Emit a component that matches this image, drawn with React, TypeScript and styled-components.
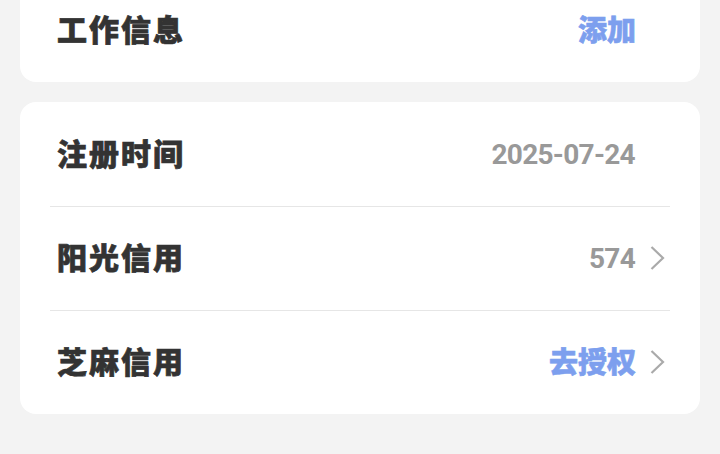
import React from "react";
import styled, { createGlobalStyle } from "styled-components";

const Global = createGlobalStyle`
  html, body { margin: 0; padding: 0; background: #f3f3f3; }
  body { width: 720px; height: 454px; overflow: hidden; font-family: "Noto Sans CJK SC", "Noto Sans", sans-serif; }
`;
const Page = styled.div`
  display: flex; flex-direction: column; gap: 20px; padding: 0 20px; margin-top: -21px;
`;
const Card = styled.section<{ $inset?: boolean }>`
  background: #fff; border-radius: 16px; padding: ${(p) => (p.$inset ? "1px" : "0")} 30px 0;
`;
const Row = styled.div<{ $last?: boolean }>`
  height: 103px; display: flex; align-items: center; padding: 0 5px 0 7px;
  border-bottom: ${(p) => (p.$last ? "none" : "1px solid #e6e6e6")};
`;
const Label = styled.span`
  flex: 1; padding-bottom: 6px; font-size: 30px; font-weight: 900; line-height: 30px; color: #333; letter-spacing: 2px;
  -webkit-text-stroke: 0.7px #333;
`;
const Value = styled.span<{ $accent?: boolean }>`
  padding-bottom: 6px; font-size: 29px; line-height: 30px; font-weight: 900; color: ${(p) => (p.$accent ? "#7d9fee" : "#999")};
  -webkit-text-stroke: 0.6px ${(p) => (p.$accent ? "#7d9fee" : "#999")};
`;
const Digits = styled(Value)`
  padding: 0 1px 0 0; font-family: "Roboto", sans-serif; font-size: 28px; font-weight: 700; letter-spacing: -0.7px;
  -webkit-text-stroke: 0;
`;
const Chevron = styled.svg`
  width: 16px; height: 26px; margin: 0 0 2px 13px; fill: none; stroke: #aaa; stroke-width: 2.2;
`;
const Spacer = styled.span`
  width: 29px;
`;
const Arrow = () => (
  <Chevron viewBox="0 0 16 26"><path d="M2.5 2l11.5 11L2.5 24" /></Chevron>
);
export default function App() {
  return (
    <Page>
      <Global />
      <Card>
        <Row $last><Label>工作信息</Label><Value $accent>添加</Value><Spacer /></Row>
      </Card>
      <Card $inset>
        <Row><Label>注册时间</Label><Digits>2025-07-24</Digits><Spacer /></Row>
        <Row><Label>阳光信用</Label><Digits>574</Digits><Arrow /></Row>
        <Row $last><Label>芝麻信用</Label><Value $accent>去授权</Value><Arrow /></Row>
      </Card>
    </Page>
  );
}
